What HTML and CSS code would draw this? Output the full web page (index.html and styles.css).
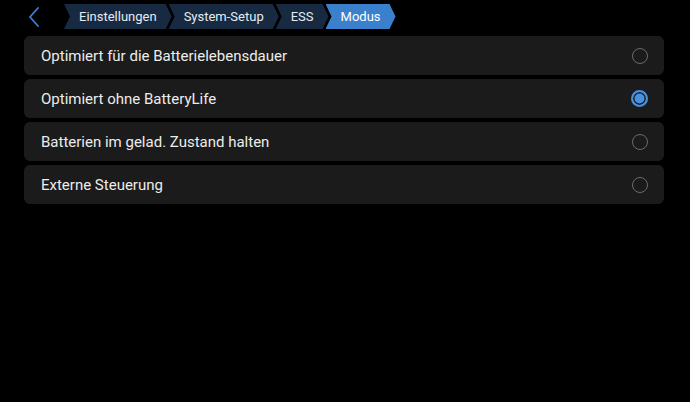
FILE: index.html
```html
<!DOCTYPE html>
<html lang="de">
<head>
    <meta charset="UTF-8">
    <meta name="viewport" content="width=device-width, initial-scale=1.0">
    <title>ESS Modus</title>
    <link rel="stylesheet" href="styles.css">
</head>
<body>
    <header class="topbar">
        <button class="back-btn" aria-label="Zurück">
            <svg width="14" height="22" viewBox="0 0 14 22">
                <polyline points="11,2 3,11 11,20" fill="none" stroke="#3b82d6" stroke-width="1.8" stroke-linecap="round" stroke-linejoin="round"/>
            </svg>
        </button>
        <nav class="crumbs">
            <span class="crumb first">Einstellungen</span>
            <span class="crumb">System-Setup</span>
            <span class="crumb">ESS</span>
            <span class="crumb active">Modus</span>
        </nav>
    </header>

    <main class="list">
        <div class="row">
            <span class="label">Optimiert für die Batterielebensdauer</span>
            <span class="radio"></span>
        </div>
        <div class="row">
            <span class="label">Optimiert ohne BatteryLife</span>
            <span class="radio checked"></span>
        </div>
        <div class="row">
            <span class="label">Batterien im gelad. Zustand halten</span>
            <span class="radio"></span>
        </div>
        <div class="row">
            <span class="label">Externe Steuerung</span>
            <span class="radio"></span>
        </div>
    </main>
</body>
</html>
```

FILE: styles.css
```css
/* Grundlayout */
body {
    margin: 0;
    background: #000;
    color: #ececec;
    font-family: Roboto, "Noto Sans", sans-serif;
    width: 690px;
    height: 402px;
    overflow: hidden;
}

/* Kopfzeile mit Brotkrumen */
.topbar {
    display: flex;
    align-items: center;
    height: 25px;
    padding: 4px 0 0 27px;
}

.back-btn {
    display: flex;
    align-items: center;
    background: none;
    border: none;
    padding: 0;
    margin-right: 23px;
    width: 14px;
    height: 22px;
    cursor: pointer;
}

.crumbs {
    display: flex;
    height: 25px;
}

.crumb {
    display: flex;
    align-items: center;
    height: 25px;
    padding: 0 15px 0 15px;
    margin-left: -3px;
    background: #172a41;
    color: #e6ecf3;
    font-size: 13px;
    clip-path: polygon(0 0, calc(100% - 6px) 0, 100% 50%, calc(100% - 6px) 100%, 0 100%, 6px 50%);
}

.crumb.first {
    margin-left: 0;
}

.crumb.active {
    background: #3a80cc;
    color: #fff;
}

/* Auswahlliste */
.list {
    display: flex;
    flex-direction: column;
    gap: 4px;
    margin: 7px 26px 0 24px;
}

.row {
    display: flex;
    align-items: center;
    justify-content: space-between;
    height: 39px;
    padding: 0 16px 0 17px;
    background: #1b1b1b;
    border-radius: 6px;
    font-size: 15px;
}

.radio {
    width: 14px;
    height: 14px;
    border: 1.5px solid #6b6b6b;
    border-radius: 50%;
}

.radio.checked {
    border: 2px solid #4a90e2;
    width: 13px;
    height: 13px;
    background: #4a90e2;
    box-shadow: inset 0 0 0 1.5px #1b1b1b;
}
```
